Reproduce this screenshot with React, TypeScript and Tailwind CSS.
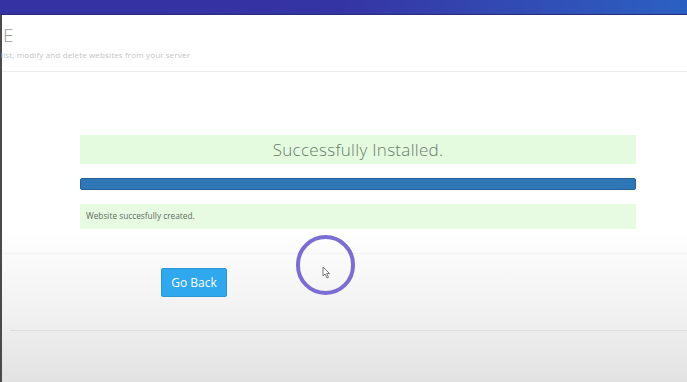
import React from "react";

export default function App() {
  return (
    <div className="relative w-[687px] h-[382px] overflow-hidden flex flex-col bg-white" style={{ fontFamily: "'Open Sans', sans-serif" }}>
      <div className="h-[15px] shrink-0 bg-gradient-to-r from-[#3532a3] via-[#3534a5] to-[#2a60c2] border-b border-[#2b2b7a]" />
      <div className="flex-1 flex flex-col border-l-2 border-[#4a4a4a] bg-[linear-gradient(to_bottom,#ffffff_0%,#ffffff_58%,#f2f2f2_80%,#e2e2e2_100%)]">
        <div className="h-[57px] shrink-0 border-b border-[#ececec] bg-white pl-[1px] pt-[11px]">
          <div className="text-[19px] leading-[19px] text-[#9a9a9a] font-light">E</div>
          <div className="mt-[4px] -ml-[2px] text-[8px] tracking-[0.15px] text-[#c4c4c4]">list, modify and delete websites from your server</div>
        </div>
        <div className="pl-[78px] pt-[63px] w-[634px] flex flex-col">
          <div className="h-[29px] bg-[#e4fbe0] flex items-center justify-center text-[17px] tracking-[0.3px] text-[#6b7a6b] font-light">
            Successfully Installed.
          </div>
          <div className="mt-[14px] h-[12px] rounded-[2px] bg-[#2f76b6] border border-[#285f97]" />
          <div className="mt-[14px] h-[25px] bg-[#e6fbe2] flex items-center pl-[6px] text-[8.3px] text-[#5d6b5d]">
            Website succesfully created.
          </div>
        </div>
        <div className="mt-[24px] border-t border-[#f4f4f4]" />
        <div className="pl-[159px] pt-[14px]">
          <button className="w-[66px] h-[29px] rounded-[2px] bg-[#2fa8ee] border border-[#2a96d6] text-white text-[12px]">
            Go Back
          </button>
        </div>
        <div className="mt-[33px] ml-[8px] border-t border-[#dedede]" />
      </div>
      <div className="absolute left-[296px] top-[235px] w-[59px] h-[60px] rounded-full border-[4px] border-[#7b6ed3]" />
      <svg className="absolute left-[322px] top-[266px]" width="9" height="13" viewBox="0 0 9 13">
        <path d="M1 1 L1 10 L3 8 L5 12 L6.5 11.3 L4.6 7.5 L7.5 7.5 Z" fill="white" stroke="#555" strokeWidth="0.8" />
      </svg>
    </div>
  );
}
